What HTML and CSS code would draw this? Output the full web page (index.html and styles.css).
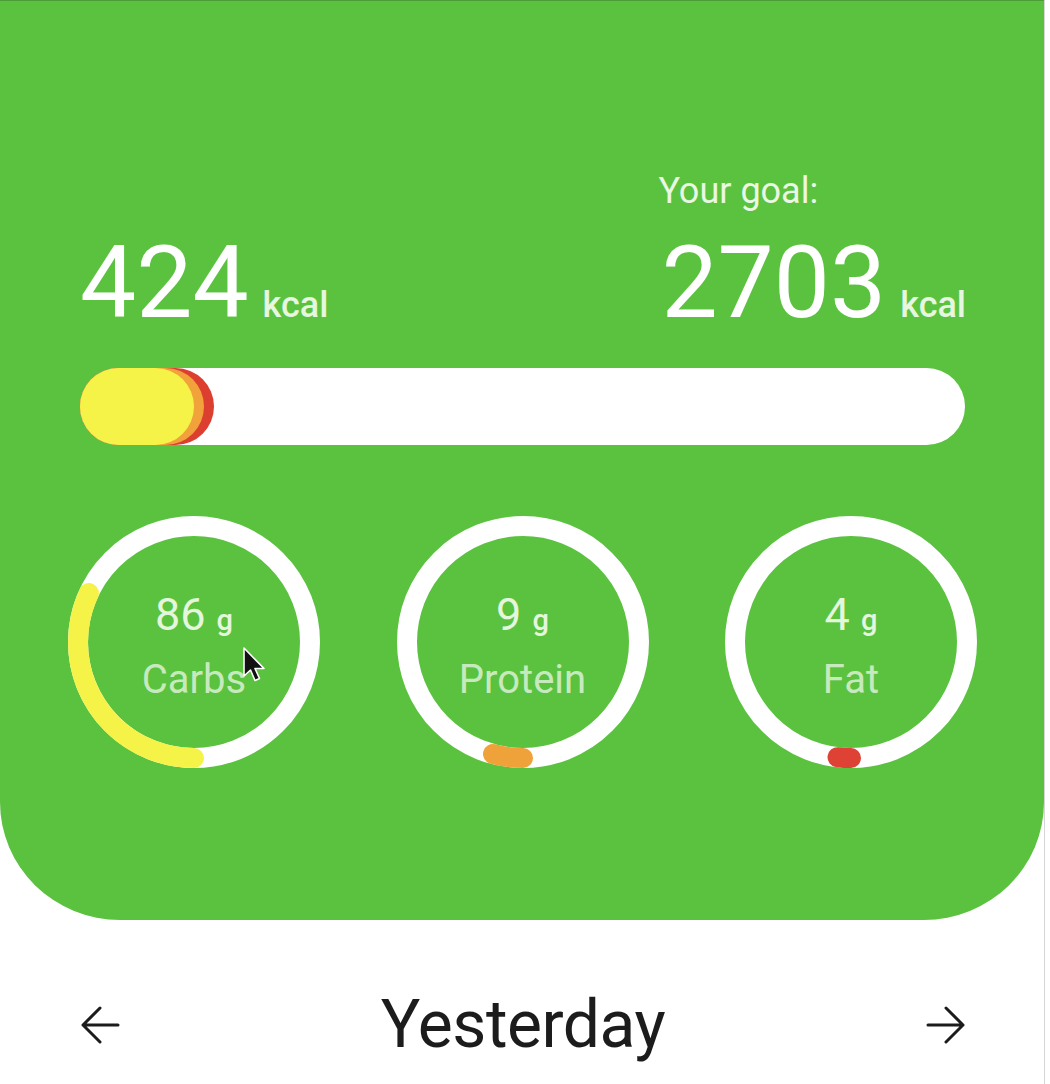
FILE: index.html
```html
<!DOCTYPE html>
<html>
<head>
<meta charset="utf-8">
<link rel="stylesheet" href="styles.css">
</head>
<body>
<div class="page">
  <section class="panel">
    <div class="stats">
      <div class="stat">
        <div class="value"><span class="num">424</span><span class="unit">kcal</span></div>
      </div>
      <div class="stat goal">
        <div class="goal-label">Your goal:</div>
        <div class="value"><span class="num">2703</span><span class="unit">kcal</span></div>
      </div>
    </div>

    <div class="bar">
      <div class="fill fill-red" style="width:134px"></div>
      <div class="fill fill-orange" style="width:124px"></div>
      <div class="fill fill-yellow" style="width:114px"></div>
    </div>

    <div class="rings">
      <div class="ring">
        <svg class="ring-svg" width="252" height="252" viewBox="0 0 252 252">
          <circle cx="126" cy="126" r="116" class="track"/>
          <path d="M126 242 A116 116 0 0 1 20.9 77" class="arc arc-yellow"/>
        </svg>
        <div class="ring-text">
          <div class="amount"><span class="amt">86</span><span class="g">g</span></div>
          <div class="label">Carbs</div>
        </div>
        <svg class="cursor" width="26" height="38" viewBox="0 0 26 38">
          <path d="M2 2 L2 30 L8.5 24 L13 34.5 L17.5 32.5 L13 22.5 L22 22.5 Z" fill="#111" stroke="#fff" stroke-width="1.6" stroke-linejoin="round"/>
        </svg>
      </div>
      <div class="ring">
        <svg class="ring-svg" width="252" height="252" viewBox="0 0 252 252">
          <circle cx="126" cy="126" r="116" class="track"/>
          <path d="M126 242 A116 116 0 0 1 96 238" class="arc arc-orange"/>
        </svg>
        <div class="ring-text">
          <div class="amount"><span class="amt">9</span><span class="g">g</span></div>
          <div class="label">Protein</div>
        </div>
      </div>
      <div class="ring">
        <svg class="ring-svg" width="252" height="252" viewBox="0 0 252 252">
          <circle cx="126" cy="126" r="116" class="track"/>
          <path d="M126 242 A116 116 0 0 1 112.5 241.2" class="arc arc-red"/>
        </svg>
        <div class="ring-text">
          <div class="amount"><span class="amt">4</span><span class="g">g</span></div>
          <div class="label">Fat</div>
        </div>
      </div>
    </div>
  </section>

  <nav class="daynav">
    <svg class="arrow" width="42" height="42" viewBox="0 0 42 42">
      <path d="M38 21 H3 M20 4 L3 21 L20 38" fill="none" stroke="#1c1c1c" stroke-width="3" stroke-linecap="round" stroke-linejoin="round"/>
    </svg>
    <div class="day">Yesterday</div>
    <svg class="arrow" width="42" height="42" viewBox="0 0 42 42">
      <path d="M4 21 H39 M22 4 L39 21 L22 38" fill="none" stroke="#1c1c1c" stroke-width="3" stroke-linecap="round" stroke-linejoin="round"/>
    </svg>
  </nav>
</div>
</body>
</html>
```

FILE: styles.css
```css
* { box-sizing: border-box; }

html, body {
  margin: 0;
  padding: 0;
  background: #ffffff;
}

body {
  font-family: Roboto, "Noto Sans", "Liberation Sans", sans-serif;
  width: 1050px;
  height: 1084px;
  overflow: hidden;
}

.page {
  width: 1045px;
  height: 1084px;
  border-right: 1px solid #d6d6d6;
  display: flex;
  flex-direction: column;
}

.panel {
  background: #5bc240;
  border-top: 1px solid #4c9d37;
  border-radius: 0 0 120px 120px / 0 0 118px 118px;
  padding: 170px 79px 152px 80px;
  display: flex;
  flex-direction: column;
}

.stats {
  display: flex;
  justify-content: space-between;
  align-items: flex-end;
}

.stat.goal {
  display: flex;
  flex-direction: column;
  align-items: flex-start;
  margin-right: -1px;
}

.goal-label {
  font-size: 36px;
  line-height: 40px;
  color: #eaf7e3;
  margin-left: -3px;
  margin-bottom: 22px;
}

.value {
  display: flex;
  align-items: baseline;
  color: #ffffff;
}

.num {
  font-size: 100px;
  font-weight: 400;
  line-height: 100px;
}

.unit {
  font-size: 36px;
  font-weight: 500;
  color: #e6f6df;
  margin-left: 14px;
}

.bar {
  margin-top: 35px;
  height: 77px;
  border-radius: 39px;
  background: #ffffff;
  display: grid;
  grid-template-columns: 1fr;
  justify-items: start;
}

.fill {
  grid-area: 1 / 1;
  height: 77px;
  border-radius: 39px;
}

.fill-red { background: #dc3f2f; }
.fill-orange { background: #f1a23a; }
.fill-yellow { background: #f5f347; }

.rings {
  margin: 71px -12px 0 -12px;
  display: flex;
  justify-content: space-between;
}

.ring {
  position: relative;
  width: 252px;
  height: 252px;
  display: grid;
  place-items: center;
}

.ring-svg {
  grid-area: 1 / 1;
}

.track {
  fill: none;
  stroke: #ffffff;
  stroke-width: 20;
}

.arc {
  fill: none;
  stroke-width: 20;
  stroke-linecap: round;
}

.arc-yellow { stroke: #f5f347; }
.arc-orange { stroke: #f0a23a; }
.arc-red { stroke: #de4235; }

.ring-text {
  grid-area: 1 / 1;
  display: flex;
  flex-direction: column;
  align-items: center;
  margin-bottom: -8px;
}

.amount {
  display: flex;
  align-items: baseline;
  color: #e4f6dd;
}

.amt {
  font-size: 45px;
  font-weight: 400;
  line-height: 54px;
}

.g {
  font-size: 29px;
  font-weight: 500;
  margin-left: 11px;
}

.label {
  font-size: 40px;
  line-height: 50px;
  color: rgba(255, 255, 255, 0.68);
  margin-top: 13px;
}

.cursor {
  position: absolute;
  left: 174px;
  top: 130px;
}

.daynav {
  display: flex;
  justify-content: space-between;
  align-items: center;
  padding: 0 78px 0 80px;
  margin-top: 65px;
}

.day {
  font-size: 66px;
  line-height: 80px;
  color: #1c1c1c;
  letter-spacing: -0.5px;
}

.arrow {
  flex: none;
}
```
